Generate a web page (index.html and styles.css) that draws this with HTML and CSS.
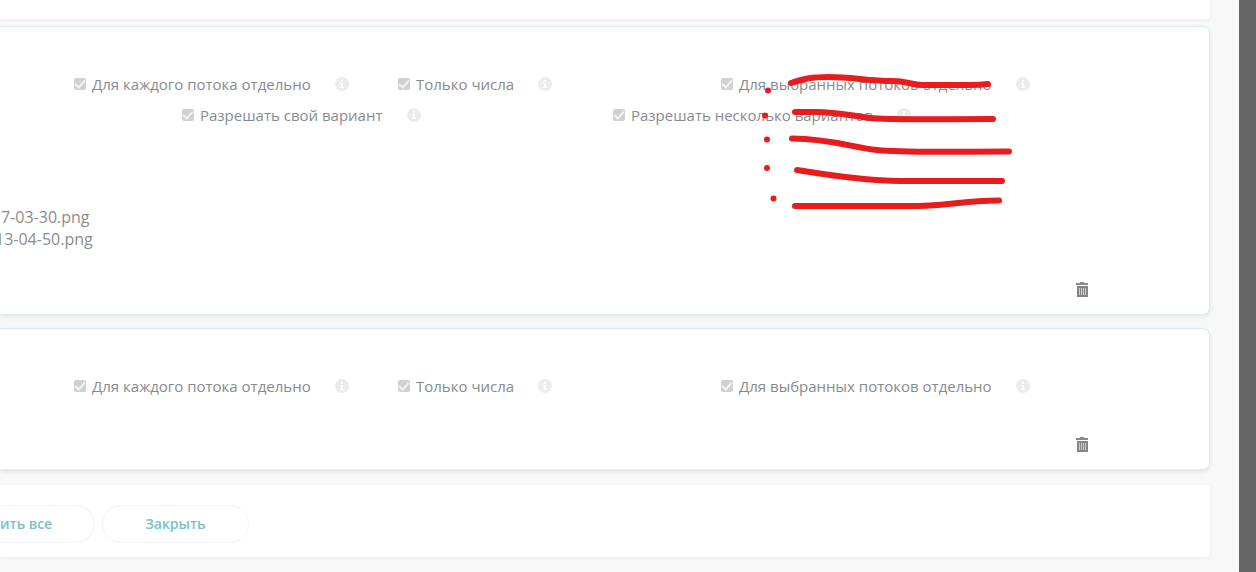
FILE: index.html
```html
<!DOCTYPE html>
<html lang="ru">
<head>
<meta charset="utf-8">
<title>Параметры</title>
<link rel="stylesheet" href="styles.css">
</head>
<body>
<svg class="defs" width="0" height="0" aria-hidden="true">
  <symbol id="info" viewBox="0 0 14 14"><circle cx="7" cy="7" r="7" fill="#ececec"/><path d="M6 3h2v2H6zM5 6h3v4h1v1H5v-1h1V7H5z" fill="#fff"/></symbol>
  <symbol id="trash" viewBox="0 0 14 16"><path d="M5 0h4v1h4v2H1V1h4z" fill="#8a8a8a"/><path d="M2 4h11v11H2z" fill="#868686"/><path d="M4 6h1v7H4zM6 6h1v7H6zM8 6h1v7H8zM10 6h1v7h-1z" fill="#c9cdd2"/></symbol>
</svg>
<div class="page">
  <main class="content">
    <section class="panel panel-top"></section>

    <section class="card card-files">
      <div class="options options-three">
        <div class="option"><label><input type="checkbox" checked disabled><span>Для каждого потока отдельно</span></label><svg class="info"><use href="#info"/></svg></div>
        <div class="option"><label><input type="checkbox" checked disabled><span>Только числа</span></label><svg class="info"><use href="#info"/></svg></div>
        <div class="option"><label><input type="checkbox" checked disabled><span>Для выбранных потоков отдельно</span></label><svg class="info"><use href="#info"/></svg></div>
      </div>
      <div class="options options-two">
        <div class="option"><label><input type="checkbox" checked disabled><span>Разрешать свой вариант</span></label><svg class="info"><use href="#info"/></svg></div>
        <div class="option"><label><input type="checkbox" checked disabled><span>Разрешать несколько вариантов</span></label><svg class="info"><use href="#info"/></svg></div>
      </div>
      <ul class="files">
        <li>7-03-30.png</li>
        <li class="clipped">13-04-50.png</li>
      </ul>
      <div class="tools"><button class="delete" type="button" aria-label="Удалить"><svg><use href="#trash"/></svg></button></div>
    </section>

    <section class="card">
      <div class="options options-three">
        <div class="option"><label><input type="checkbox" checked disabled><span>Для каждого потока отдельно</span></label><svg class="info"><use href="#info"/></svg></div>
        <div class="option"><label><input type="checkbox" checked disabled><span>Только числа</span></label><svg class="info"><use href="#info"/></svg></div>
        <div class="option"><label><input type="checkbox" checked disabled><span>Для выбранных потоков отдельно</span></label><svg class="info"><use href="#info"/></svg></div>
      </div>
      <div class="tools"><button class="delete" type="button" aria-label="Удалить"><svg><use href="#trash"/></svg></button></div>
    </section>

    <section class="panel actions">
      <button class="pill pill-cut" type="button">ить все</button>
      <button class="pill" type="button">Закрыть</button>
    </section>
  </main>
  <aside class="backdrop"></aside>
  <svg class="marks" width="260" height="150" viewBox="760 65 260 150" aria-hidden="true">
    <g fill="none" stroke="#e81c1c" stroke-width="6" stroke-linecap="round" stroke-linejoin="round">
      <path d="M791 83C803 79 811 77 829 77C850 77 870 81 892 81C908 81 911 85 923 85H970Q980 85 988 84"/>
      <path d="M795 112H816C838 112 852 116 870 118C890 120 930 119 993 119"/>
      <path d="M792 138.500C832 139 850 147 877 150C905 153 935 151.500 1009 151.500"/>
      <path d="M797 170C828 175 870 181 900 181H1002"/>
      <path d="M795 206H910C945 206 960 201 999 200.500"/>
    </g>
    <g fill="#e81c1c"><circle cx="768" cy="90.500" r="3"/><circle cx="765" cy="115.500" r="3"/><circle cx="767" cy="139.500" r="3"/><circle cx="767" cy="168" r="3"/><circle cx="773.500" cy="198.500" r="3"/></g>
  </svg>
</div>
</body>
</html>
```
FILE: styles.css
```css
* { box-sizing: border-box; }

body {
  margin: 0;
  background: #f8f8f8;
  color: #868b8f;
  font-family: "Open Sans", sans-serif;
  font-size: 15px;
  line-height: 20px;
}

.defs { position: absolute; }

.page {
  position: relative;
  display: flex;
  min-height: 100vh;
  overflow: hidden;
}

.content {
  flex: 1;
  min-width: 0;
  padding-right: 29px;
}

.backdrop {
  width: 17px;
  background: repeating-conic-gradient(#616161 0 25%, #686868 0 50%) 0 0 / 2px 2px;
}

.panel {
  background: #fff;
  border-radius: 0 4px 4px 0;
  box-shadow: 0 1px 4px rgba(0, 0, 0, 0.06);
}

.panel-top {
  height: 19px;
  border-radius: 0 0 4px 0;
  margin-bottom: 7px;
}

.card {
  background: #fff;
  border: 1px solid #d9edf1;
  border-left: 0;
  border-radius: 0 7px 7px 0;
  box-shadow: 0 2px 4px rgba(0, 0, 0, 0.08);
  padding: 47px 0 16px;
  margin-bottom: 13px;
}

.options {
  display: grid;
  padding-left: 74px;
}

.options-three { grid-template-columns: 324fr 323fr 488fr; }

.options-two {
  grid-template-columns: 431fr 596fr;
  padding-left: 182px;
  margin-top: 11px;
}

.option {
  display: flex;
  align-items: center;
  gap: 24px;
  white-space: nowrap;
}

.option label {
  display: flex;
  align-items: center;
  gap: 6px;
}

input[type="checkbox"] {
  appearance: none;
  width: 12px;
  height: 12px;
  margin: 0;
  border-radius: 2px;
  background: #d1d1d1;
  display: grid;
  place-items: center;
}

input[type="checkbox"]::before {
  content: "";
  width: 8px;
  height: 4px;
  border: solid #f4f4f4;
  border-width: 0 0 2px 2px;
  transform: translateY(-1px) rotate(-48deg);
}

.info { width: 14px; height: 14px; }

.files {
  list-style: none;
  margin: 81px 0 0;
  padding-left: 1px;
  font-size: 16px;
  font-weight: 500;
  line-height: 22px;
  color: #8c8c8c;
}

.clipped { margin-left: -6px; }

.tools {
  display: flex;
  justify-content: flex-end;
  padding-right: 120px;
  margin-top: 41px;
}

.card-files .tools { margin-top: 32px; }

.delete {
  display: flex;
  border: 0;
  padding: 0;
  background: none;
}

.delete svg { width: 14px; height: 16px; }

.actions {
  display: flex;
  gap: 7px;
  margin-top: 15px;
  padding: 20px 0 14px;
}

.pill {
  height: 38px;
  border: 1px solid #f1f4f4;
  border-radius: 19px;
  padding: 0 42px;
  background: #fff;
  color: #78c1cb;
  font: 600 14px/20px "Open Sans", sans-serif;
}

.pill-cut {
  border-left: 0;
  border-radius: 0 19px 19px 0;
  padding-left: 0;
}

.marks {
  position: absolute;
  left: 760px;
  top: 65px;
}
```
